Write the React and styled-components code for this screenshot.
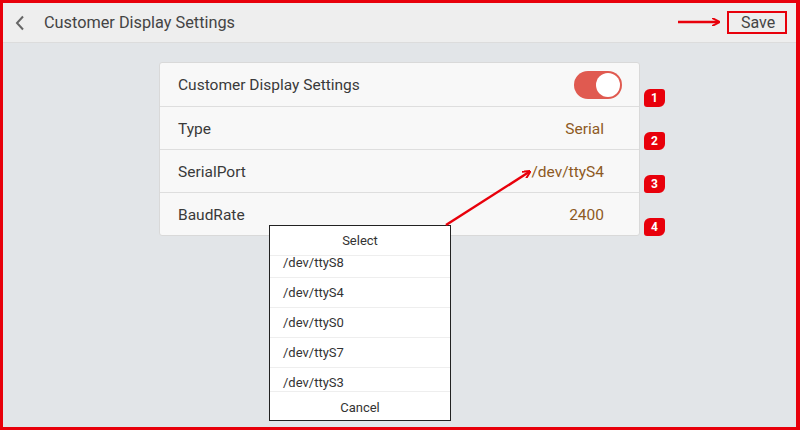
import React from "react"
import styled, { createGlobalStyle } from "styled-components"

const GlobalStyle = createGlobalStyle`
  html, body {
    margin: 0;
    padding: 0;
    font-family: Roboto, "Liberation Sans", sans-serif;
  }
  * { box-sizing: border-box; }
`

const Frame = styled.div`
  position: relative;
  width: 800px;
  height: 430px;
  border: 3px solid #e8000b;
  border-right-width: 4px;
  background: #e2e5e8;
  display: flex;
  flex-direction: column;
  overflow: hidden;
`

const Header = styled.header`
  height: 40px;
  flex: none;
  display: flex;
  align-items: center;
  background: #eeeeee;
  border-bottom: 1px solid #dcdcdc;
  padding: 0 9px 0 12px;
`

const Back = styled.div`
  width: 14px;
  height: 20px;
  display: flex;
  align-items: center;
  margin-right: 15px;
`

const Title = styled.h1`
  margin: 0;
  font-size: 16.3px;
  font-weight: 400;
  color: #444;
  flex: 1;
`

const SaveButton = styled.div`
  border: 2px solid #e8000b;
  width: 60px;
  height: 23px;
  display: flex;
  align-items: center;
  justify-content: center;
  font-size: 16px;
  color: #444;
  padding-left: 2px;
`

const Body = styled.main`
  flex: 1;
  display: flex;
  justify-content: center;
  padding-top: 19px;
`

const Card = styled.section`
  width: 481px;
  height: 174px;
  background: #f8f8f8;
  border: 1px solid #d9d9d9;
  border-radius: 3px;
  display: flex;
  flex-direction: column;
`

const Row = styled.div`
  position: relative;
  height: 43px;
  display: flex;
  align-items: center;
  justify-content: space-between;
  padding: 1px ${p => (p.$toggle ? "17px" : "35px")} 0 18px;
  border-top: ${p => (p.$first ? "none" : "1px solid #dedede")};
  font-size: 15.5px;
  color: #3a3a3a;
`

const Value = styled.span`
  color: #8e5a24;
`

const Toggle = styled.div`
  width: 48px;
  height: 28px;
  border-radius: 14px;
  background: #e05a50;
  display: flex;
  align-items: center;
  justify-content: flex-end;
  padding-right: 2px;
`

const Knob = styled.div`
  width: 24px;
  height: 24px;
  border-radius: 50%;
  background: #fff;
`

const Badge = styled.div`
  position: absolute;
  right: -26px;
  bottom: -1px;
  width: 21px;
  height: 18px;
  background: #e8000b;
  color: #fff;
  font-size: 12px;
  font-weight: 700;
  display: flex;
  align-items: center;
  justify-content: center;
  border-radius: 6px 3px 6px 3px;
`

const Dialog = styled.div`
  position: absolute;
  left: 266px;
  top: 222px;
  width: 182px;
  height: 196px;
  background: #fff;
  border: 1.5px solid #222;
  display: flex;
  flex-direction: column;
  font-size: 13px;
  color: #333;
`

const DialogTitle = styled.div`
  height: 30px;
  flex: none;
  display: flex;
  align-items: center;
  justify-content: center;
  border-bottom: 1px solid #eee;
`

const List = styled.div`
  flex: 1;
  min-height: 0;
  overflow: hidden;
`

const Track = styled.div`
  margin-top: -8px;
`

const Option = styled.div`
  height: 30px;
  display: flex;
  align-items: center;
  padding-left: 13px;
  border-bottom: 1px solid #eee;
`

const Cancel = styled.div`
  height: 29px;
  flex: none;
  display: flex;
  align-items: center;
  justify-content: center;
  padding-top: 2px;
  border-top: 1px solid #eee;
  background: #fff;
`

const Overlay = styled.svg`
  position: absolute;
  left: -3px;
  top: -3px;
  pointer-events: none;
`

const rows = [
  { label: "Type", value: "Serial" },
  { label: "SerialPort", value: "/dev/ttyS4" },
  { label: "BaudRate", value: "2400" },
]

const ports = ["/dev/ttyS8", "/dev/ttyS4", "/dev/ttyS0", "/dev/ttyS7", "/dev/ttyS3"]

export default function App() {
  return (
    <>
      <GlobalStyle />
      <Frame>
        <Header>
          <Back>
            <svg width="10" height="16" viewBox="0 0 10 16">
              <path d="M8 1.5 L2 8 L8 14.5" fill="none" stroke="#666" strokeWidth="2" />
            </svg>
          </Back>
          <Title>Customer Display Settings</Title>
          <SaveButton>Save</SaveButton>
        </Header>
        <Body>
          <Card>
            <Row $first $toggle>
              Customer Display Settings
              <Toggle>
                <Knob />
              </Toggle>
              <Badge>1</Badge>
            </Row>
            {rows.map((r, i) => (
              <Row key={r.label}>
                {r.label}
                <Value>{r.value}</Value>
                <Badge>{i + 2}</Badge>
              </Row>
            ))}
          </Card>
        </Body>
        <Dialog>
          <DialogTitle>Select</DialogTitle>
          <List>
            <Track>
              {ports.map(p => (
                <Option key={p}>{p}</Option>
              ))}
            </Track>
          </List>
          <Cancel>Cancel</Cancel>
        </Dialog>
        <Overlay width="800" height="430">
          <defs>
            <marker id="head" markerWidth="8" markerHeight="8" refX="6" refY="4" orient="auto" markerUnits="userSpaceOnUse">
              <path d="M0 0 L8 4 L0 8" fill="none" stroke="#e8000b" strokeWidth="2" />
            </marker>
          </defs>
          <line x1="678" y1="22" x2="718" y2="22" stroke="#e8000b" strokeWidth="2.5" markerEnd="url(#head)" />
          <line x1="446" y1="225" x2="529" y2="172" stroke="#e8000b" strokeWidth="2.5" markerEnd="url(#head)" />
        </Overlay>
      </Frame>
    </>
  )
}
